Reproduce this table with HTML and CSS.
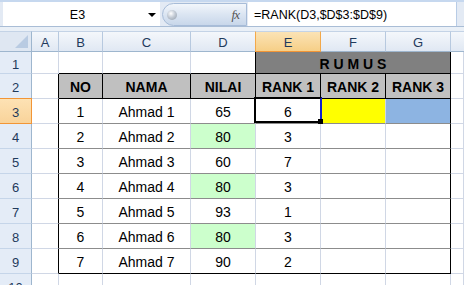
FILE: index.html
```html
<!DOCTYPE html>
<html>
<head>
<meta charset="utf-8">
<link rel="stylesheet" href="styles.css">
</head>
<body>
<div class="app">
  <div class="fbar">
    <div class="namebox"><span class="name">E3</span><span class="arrow"></span></div>
    <div class="fxpill"><span class="knob"></span><span class="fx">fx</span></div>
    <div class="formula">=RANK(D3,$D$3:$D$9)</div>
  </div>
  <div class="sheet">
    <!-- column headers -->
    <div class="ch corner"><span class="tri"></span></div>
    <div class="ch">A</div>
    <div class="ch">B</div>
    <div class="ch">C</div>
    <div class="ch">D</div>
    <div class="ch chsel">E</div>
    <div class="ch">F</div>
    <div class="ch">G</div>
    <div class="ch last"></div>

    <!-- row 1 -->
    <div class="rh">1</div>
    <div class="c"></div>
    <div class="c bb"></div>
    <div class="c bb"></div>
    <div class="c bb br"></div>
    <div class="c rumus bb br">R U M U S</div>
    <div class="c"></div>

    <!-- row 2 -->
    <div class="rh">2</div>
    <div class="c br"></div>
    <div class="c th">NO</div>
    <div class="c th">NAMA</div>
    <div class="c th">NILAI</div>
    <div class="c th">RANK 1</div>
    <div class="c th">RANK 2</div>
    <div class="c th">RANK 3</div>
    <div class="c"></div>

    <!-- row 3 -->
    <div class="rh rhsel">3</div>
    <div class="c br"></div>
    <div class="c gb">1</div>
    <div class="c gb">Ahmad 1</div>
    <div class="c gb">65</div>
    <div class="c gb cur">6<span class="selbox"><span class="handle"></span></span></div>
    <div class="c gb yellow"></div>
    <div class="c gb br blue"></div>
    <div class="c"></div>

    <!-- row 4 -->
    <div class="rh">4</div>
    <div class="c br"></div>
    <div class="c gb">2</div>
    <div class="c gb">Ahmad 2</div>
    <div class="c gb green">80</div>
    <div class="c gb">3</div>
    <div class="c gb"></div>
    <div class="c gb br"></div>
    <div class="c"></div>

    <!-- row 5 -->
    <div class="rh">5</div>
    <div class="c br"></div>
    <div class="c gb">3</div>
    <div class="c gb">Ahmad 3</div>
    <div class="c gb">60</div>
    <div class="c gb">7</div>
    <div class="c gb"></div>
    <div class="c gb br"></div>
    <div class="c"></div>

    <!-- row 6 -->
    <div class="rh">6</div>
    <div class="c br"></div>
    <div class="c gb">4</div>
    <div class="c gb">Ahmad 4</div>
    <div class="c gb green">80</div>
    <div class="c gb">3</div>
    <div class="c gb"></div>
    <div class="c gb br"></div>
    <div class="c"></div>

    <!-- row 7 -->
    <div class="rh">7</div>
    <div class="c br"></div>
    <div class="c gb">5</div>
    <div class="c gb">Ahmad 5</div>
    <div class="c gb">93</div>
    <div class="c gb">1</div>
    <div class="c gb"></div>
    <div class="c gb br"></div>
    <div class="c"></div>

    <!-- row 8 -->
    <div class="rh">8</div>
    <div class="c br"></div>
    <div class="c gb">6</div>
    <div class="c gb">Ahmad 6</div>
    <div class="c gb green">80</div>
    <div class="c gb">3</div>
    <div class="c gb"></div>
    <div class="c gb br"></div>
    <div class="c"></div>

    <!-- row 9 -->
    <div class="rh">9</div>
    <div class="c br"></div>
    <div class="c bb">7</div>
    <div class="c bb">Ahmad 7</div>
    <div class="c bb">90</div>
    <div class="c bb">2</div>
    <div class="c bb"></div>
    <div class="c bb br"></div>
    <div class="c"></div>

    <!-- row 10 -->
    <div class="rh">10</div>
    <div class="c"></div>
    <div class="c"></div>
    <div class="c"></div>
    <div class="c"></div>
    <div class="c"></div>
    <div class="c"></div>
    <div class="c"></div>
    <div class="c"></div>
  </div>
</div>
</body>
</html>
```

FILE: styles.css
```css
html, body {
  margin: 0;
  padding: 0;
}
body {
  width: 464px;
  height: 285px;
  overflow: hidden;
  background: #ffffff;
  font-family: "Liberation Sans", Arial, sans-serif;
  color: #000;
}
.app {
  width: 464px;
  height: 285px;
  overflow: hidden;
}

/* formula bar */
.fbar {
  box-sizing: border-box;
  height: 31px;
  display: flex;
  align-items: flex-start;
  padding: 0 7px 0 3px;
  border-top: 2px solid #c6d8ef;
  background: linear-gradient(#e3eaf4 0, #e3eaf4 24px, #a9bdd6 24px, #a9bdd6 25px, #eaf0f7 25px);
}
.namebox {
  box-sizing: border-box;
  width: 157px;
  height: 24px;
  background: #fff;
  display: flex;
  align-items: center;
  padding-top: 2px;
}
.name {
  flex: 1;
  text-align: center;
  font-size: 12.5px;
  padding-left: 4px;
}
.arrow {
  width: 0;
  height: 0;
  border-left: 4px solid transparent;
  border-right: 4px solid transparent;
  border-top: 4px solid #000;
  margin-right: 4px;
}
.fxpill {
  box-sizing: border-box;
  margin-left: 2px;
  margin-top: 1px;
  width: 85px;
  height: 23px;
  border: 1px solid #a7bcd8;
  border-radius: 12px 0 0 12px;
  background: linear-gradient(#f2f6fb, #dbe5f2 50%, #c8d7ea);
  display: flex;
  align-items: center;
  justify-content: space-between;
  padding: 0 7px 0 4px;
}
.knob {
  width: 10px;
  height: 10px;
  border-radius: 50%;
  background: radial-gradient(circle at 40% 35%, #ffffff, #c3cbd5 45%, #8e99a6);
}
.fx {
  font-family: "Liberation Serif", "Times New Roman", serif;
  font-style: italic;
  font-size: 13px;
  color: #555;
  letter-spacing: -1px;
}
.formula {
  box-sizing: border-box;
  flex: 1;
  height: 24px;
  margin-left: 1px;
  background: #fff;
  font-size: 12.5px;
  padding: 6px 0 0 6px;
  white-space: nowrap;
  border-right: 1px solid #b8cce6;
}

/* sheet grid */
.sheet {
  display: grid;
  grid-template-columns: 32px 27px 44px 88px 65px 65px 65px 65px 1fr;
  grid-template-rows: 21px 22px repeat(8, 25px) 25px;
  background: #fff;
}
.sheet > div {
  box-sizing: border-box;
}
.ch {
  background: linear-gradient(#f4f7fb, #e0e8f3);
  border-right: 1px solid #b7c9df;
  border-bottom: 1px solid #9eb6ce;
  border-top: 1px solid #c4d3e6;
  font-size: 13px;
  color: #1f3a5c;
  display: flex;
  align-items: center;
  justify-content: center;
  padding-top: 2px;
}
.ch.last {
  border-right: none;
}
.corner {
  position: relative;
  background: #dfe7f2;
  border-right: 1px solid #9eb6ce;
}
.tri {
  position: absolute;
  right: 3px;
  bottom: 3px;
  width: 0;
  height: 0;
  border-left: 13px solid transparent;
  border-bottom: 13px solid #b9cbe2;
}
.chsel {
  background: linear-gradient(#fbe3b6, #f6cf87);
  border-right: 1px solid #f2a84a;
  border-bottom: 1px solid #f29536;
  border-left: 1px solid #f2a84a;
  margin-left: -1px;
}
.rh {
  background: #e4ecf7;
  border-right: 1px solid #9eb6ce;
  border-bottom: 1px solid #c5d5e9;
  font-size: 13px;
  color: #1f3a5c;
  display: flex;
  align-items: center;
  justify-content: center;
  padding-top: 3px;
}
.rhsel {
  background: linear-gradient(#fde2b4, #f9d39a);
  border-bottom: 1px solid #f29536;
  border-top: 1px solid #f29536;
  margin-top: -1px;
  border-right: 1px solid #f29536;
}

.c {
  border-right: 1px solid #d0d7e5;
  border-bottom: 1px solid #d0d7e5;
  font-size: 14px;
  display: flex;
  align-items: center;
  justify-content: center;
  padding-top: 2px;
  white-space: nowrap;
}
.c.br {
  border-right-color: #000;
}
.c.bb {
  border-bottom-color: #000;
}
.c.gb {
  border-bottom-color: #8c8c8c;
}
.rumus {
  grid-column: span 3;
  background: #808080;
  font-weight: bold;
}
.th {
  background: #c0c0c0;
  font-weight: bold;
  border-right-color: #000 !important;
  border-bottom-color: #000 !important;
}
.green {
  background: #ccffcc;
}
.yellow {
  background: #ffff00;
}
.blue {
  background: #8db4e2;
}
.cur {
  position: relative;
}
.selbox {
  position: absolute;
  left: -2px;
  top: -2px;
  width: 68px;
  height: 26px;
  box-sizing: border-box;
  border: 2px solid #000;
  border-right-color: #1020d0;
}
.handle {
  position: absolute;
  left: 62px;
  top: 20px;
  width: 5px;
  height: 5px;
  background: #000;
}
```
